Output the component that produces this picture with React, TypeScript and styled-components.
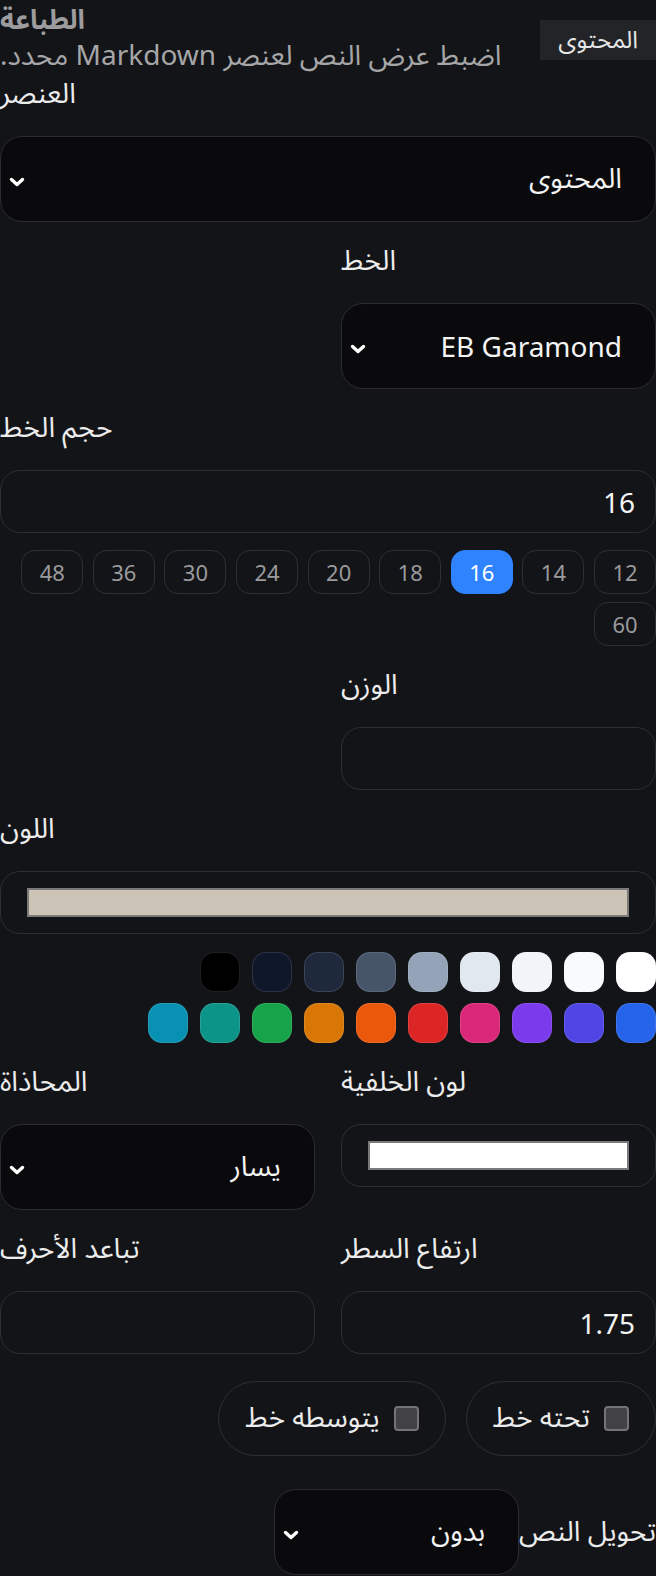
import React from 'react';
import styled, { createGlobalStyle } from 'styled-components';

const GlobalStyle = createGlobalStyle`
    html, body {
        margin: 0;
        padding: 0;
        background: #131417;
    }
    * {
        box-sizing: border-box;
    }
`;

const Page = styled.div`
    direction: rtl;
    width: 656px;
    height: 1576px;
    overflow: hidden;
    background: #131417;
    color: #ececec;
    font-family: "Noto Sans", "Noto Sans Arabic", "DejaVu Sans", sans-serif;
`;

const Header = styled.div`
    display: flex;
    justify-content: space-between;
    align-items: flex-start;
`;

const Badge = styled.div`
    margin-top: 20px;
    height: 40px;
    padding: 0 18px;
    display: flex;
    align-items: center;
    background: #232427;
    font-size: 24px;
    color: #e6e6e6;
`;

const TitleBlock = styled.div`
    text-align: left;
`;

const Title = styled.div`
    font-size: 27px;
    font-weight: 700;
    line-height: 37px;
    color: #9c9c9e;
`;

const Subtitle = styled.div`
    font-size: 28px;
    line-height: 35px;
    color: #a6a6a8;
    white-space: nowrap;
`;

const Form = styled.div`
    display: grid;
    grid-template-columns: 1fr 1fr;
    column-gap: 26px;
    row-gap: 17px;
`;

const Field = styled.div<{ $wide?: boolean }>`
    grid-column: ${p => (p.$wide ? '1 / 3' : 'auto')};
    display: flex;
    flex-direction: column;
    min-width: 0;
`;

const Label = styled.label`
    display: block;
    text-align: left;
    font-size: 28px;
    line-height: 40px;
    color: #ececec;
    margin-bottom: 24px;
`;

const SelectBox = styled.div<{ $width?: number }>`
    display: flex;
    align-items: center;
    justify-content: space-between;
    flex-shrink: 0;
    height: 86px;
    width: ${p => (p.$width ? `${p.$width}px` : '100%')};
    padding: 0 33px 0 6px;
    background: #0a0a0c;
    border: 1.5px solid #2c2d30;
    border-radius: 22px;
    font-size: 28px;
    color: #f4f4f4;
`;

const Chevron = () => (
    <svg width="20" height="20" viewBox="0 0 20 20" style={{ marginTop: 6 }}>
        <path d="M4.5 7.5l5.5 5 5.5-5" fill="none" stroke="#ffffff" strokeWidth="3.4" strokeLinecap="round" strokeLinejoin="round" />
    </svg>
);

const Input = styled.div`
    display: flex;
    align-items: center;
    height: 63px;
    padding: 0 20px;
    border: 1.5px solid #2e2f32;
    border-radius: 20px;
    font-size: 28px;
    color: #f4f4f4;
`;

const Chips = styled.div`
    display: flex;
    flex-wrap: wrap;
    gap: 8px 9.6px;
    margin-top: 17px;
`;

const Chip = styled.div<{ $active?: boolean }>`
    width: 62px;
    height: 44px;
    display: flex;
    align-items: center;
    justify-content: center;
    border-radius: 14px;
    font-size: 22px;
    border: 1.5px solid ${p => (p.$active ? '#2f83ff' : '#2e2f32')};
    background: ${p => (p.$active ? '#2f83ff' : 'transparent')};
    color: ${p => (p.$active ? '#ffffff' : '#9a9a9c')};
`;

const ColorBox = styled.div`
    height: 63px;
    padding: 16px 26px;
    border: 1.5px solid #2e2f32;
    border-radius: 20px;
`;

const ColorFill = styled.div<{ $color: string }>`
    height: 100%;
    background: ${p => p.$color};
    border: 2px solid #7a7a7a;
`;

const SwatchRows = styled.div`
    display: flex;
    flex-direction: column;
    gap: 11px;
    margin-top: 18px;
`;

const SwatchRow = styled.div`
    display: flex;
    gap: 12px;
`;

const Swatch = styled.div<{ $color: string }>`
    width: 40px;
    height: 40px;
    border-radius: 14px;
    background: ${p => p.$color};
    border: 1px solid rgba(255, 255, 255, 0.12);
`;

const CheckRow = styled.div`
    display: flex;
    gap: 20px;
    margin-top: 10px;
`;

const CheckPill = styled.div`
    display: flex;
    align-items: center;
    gap: 14px;
    height: 75px;
    padding: 0 26px;
    border: 1.5px solid #2e2f32;
    border-radius: 999px;
    font-size: 28px;
    color: #ececec;
`;

const CheckBox = styled.span`
    width: 25px;
    height: 25px;
    border-radius: 4px;
    background: #424244;
    border: 2px solid #747476;
`;

const InlineRow = styled.div`
    display: flex;
    align-items: center;
    margin-top: 16px;
`;

const InlineLabel = styled.span`
    font-size: 28px;
    color: #ececec;
    white-space: nowrap;
`;

const grays = ['#ffffff', '#f8fafc', '#f1f5f9', '#e2e8f0', '#94a3b8', '#475569', '#1e293b', '#0f172a', '#000000'];
const colors = ['#2563eb', '#4f46e5', '#7c3aed', '#db2777', '#dc2626', '#ea580c', '#d97706', '#16a34a', '#0d9488', '#0891b2'];
const sizes = [12, 14, 16, 18, 20, 24, 30, 36, 48, 60];

export default function App() {
    return (
        <Page>
            <GlobalStyle />
            <Header>
                <Badge>المحتوى</Badge>
                <TitleBlock>
                    <Title>الطباعة</Title>
                    <Subtitle>اضبط عرض النص لعنصر Markdown محدد.</Subtitle>
                </TitleBlock>
            </Header>

            <Form>
                <Field $wide>
                    <Label>العنصر</Label>
                    <SelectBox>
                        <span>المحتوى</span>
                        <Chevron />
                    </SelectBox>
                </Field>

                <Field>
                    <Label>الخط</Label>
                    <SelectBox>
                        <span>EB Garamond</span>
                        <Chevron />
                    </SelectBox>
                </Field>

                <Field $wide>
                    <Label>حجم الخط</Label>
                    <Input>16</Input>
                    <Chips>
                        {sizes.map(s => (
                            <Chip key={s} $active={s === 16}>{s}</Chip>
                        ))}
                    </Chips>
                </Field>

                <Field>
                    <Label>الوزن</Label>
                    <Input />
                </Field>

                <Field $wide>
                    <Label>اللون</Label>
                    <ColorBox>
                        <ColorFill $color="#cbc4b7" />
                    </ColorBox>
                    <SwatchRows>
                        <SwatchRow>
                            {grays.map(c => <Swatch key={c} $color={c} />)}
                        </SwatchRow>
                        <SwatchRow>
                            {colors.map(c => <Swatch key={c} $color={c} />)}
                        </SwatchRow>
                    </SwatchRows>
                </Field>

                <Field>
                    <Label>لون الخلفية</Label>
                    <ColorBox>
                        <ColorFill $color="#ffffff" />
                    </ColorBox>
                </Field>

                <Field>
                    <Label>المحاذاة</Label>
                    <SelectBox>
                        <span>يسار</span>
                        <Chevron />
                    </SelectBox>
                </Field>

                <Field>
                    <Label>ارتفاع السطر</Label>
                    <Input>1.75</Input>
                </Field>

                <Field>
                    <Label>تباعد الأحرف</Label>
                    <Input />
                </Field>

                <Field $wide>
                    <CheckRow>
                        <CheckPill>
                            <CheckBox />
                            تحته خط
                        </CheckPill>
                        <CheckPill>
                            <CheckBox />
                            يتوسطه خط
                        </CheckPill>
                    </CheckRow>
                </Field>

                <Field $wide>
                    <InlineRow>
                        <InlineLabel>تحويل النص</InlineLabel>
                        <SelectBox $width={245}>
                            <span>بدون</span>
                            <Chevron />
                        </SelectBox>
                    </InlineRow>
                </Field>
            </Form>
        </Page>
    );
}
